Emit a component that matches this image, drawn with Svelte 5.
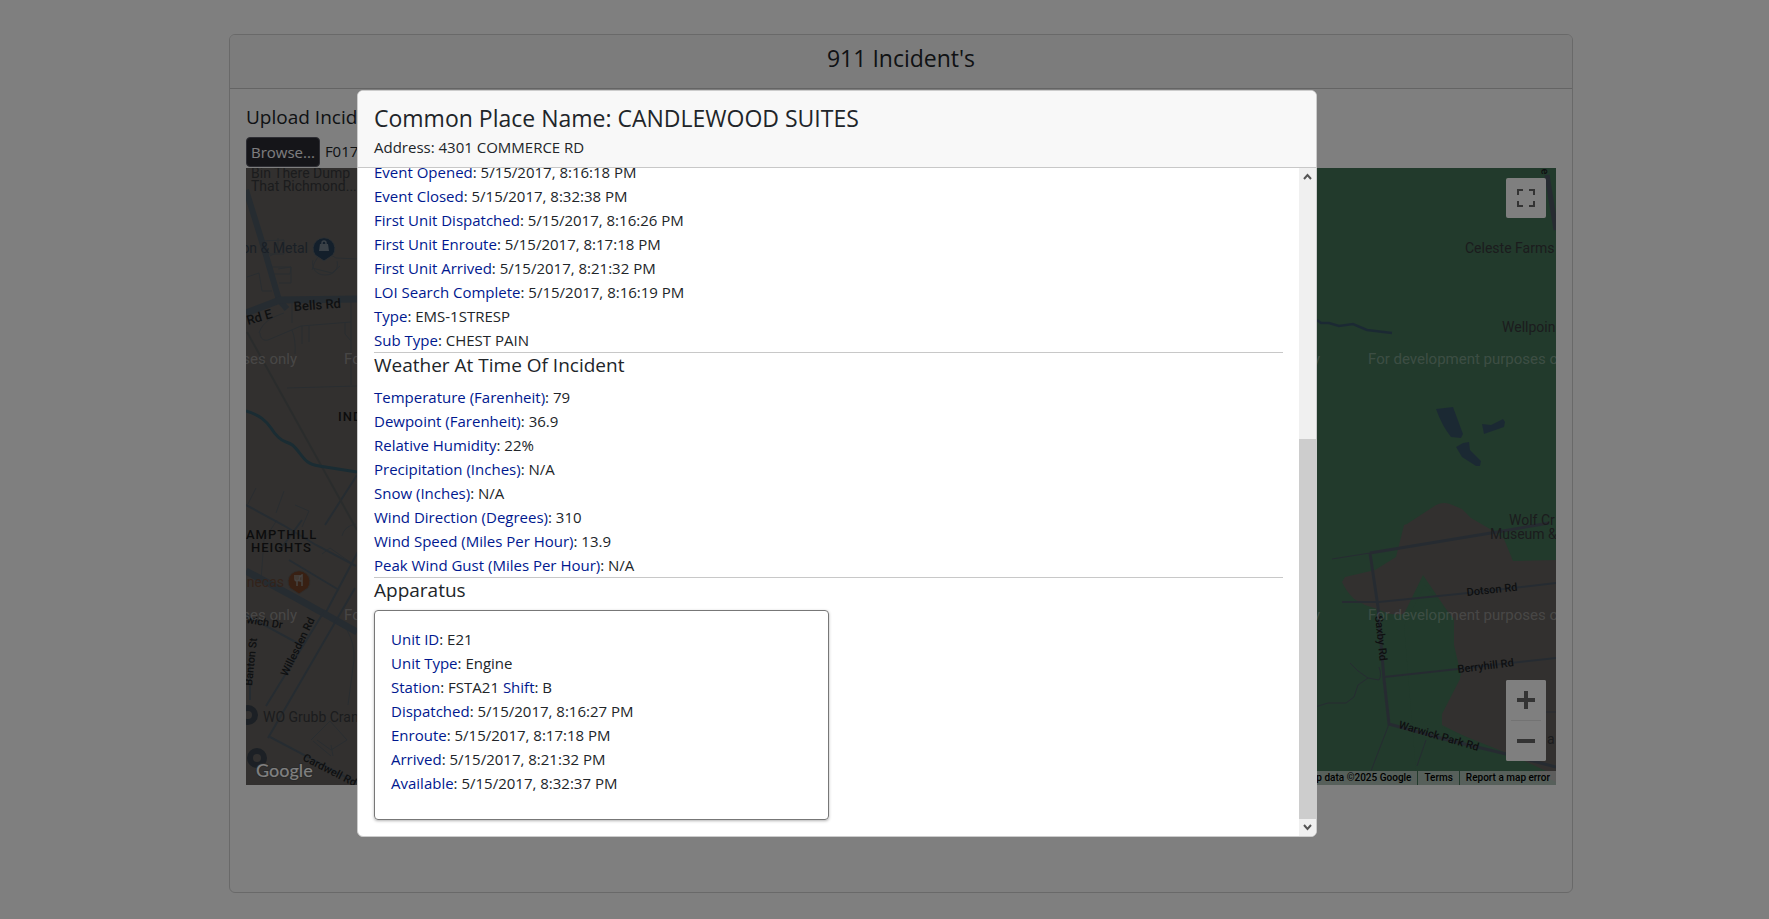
<script>
  const events = [
    ['Event Opened', '5/15/2017, 8:16:18 PM'],
    ['Event Closed', '5/15/2017, 8:32:38 PM'],
    ['First Unit Dispatched', '5/15/2017, 8:16:26 PM'],
    ['First Unit Enroute', '5/15/2017, 8:17:18 PM'],
    ['First Unit Arrived', '5/15/2017, 8:21:32 PM'],
    ['LOI Search Complete', '5/15/2017, 8:16:19 PM'],
    ['Type', 'EMS-1STRESP'],
    ['Sub Type', 'CHEST PAIN']
  ];
  const weather = [
    ['Temperature (Farenheit)', '79'],
    ['Dewpoint (Farenheit)', '36.9'],
    ['Relative Humidity', '22%'],
    ['Precipitation (Inches)', 'N/A'],
    ['Snow (Inches)', 'N/A'],
    ['Wind Direction (Degrees)', '310'],
    ['Wind Speed (Miles Per Hour)', '13.9'],
    ['Peak Wind Gust (Miles Per Hour)', 'N/A']
  ];
  const unit = [
    [['Unit ID', 'E21']],
    [['Unit Type', 'Engine']],
    [['Station', 'FSTA21'], ['Shift', 'B']],
    [['Dispatched', '5/15/2017, 8:16:27 PM']],
    [['Enroute', '5/15/2017, 8:17:18 PM']],
    [['Arrived', '5/15/2017, 8:21:32 PM']],
    [['Available', '5/15/2017, 8:32:37 PM']]
  ];
  let fileInput;
</script>

{#snippet field(name, value)}
  <span class="name">{name}</span>: {value}
{/snippet}

<main class="page">
  <section class="card">
    <header class="card-header"><h1>911 Incident's</h1></header>
    <div class="card-body">
      <label class="upload-label" for="incident-file">Upload Incident</label>
      <div class="upload">
        <input id="incident-file" type="file" bind:this={fileInput} />
        <button type="button" class="browse" onclick={() => fileInput.click()}>Browse...</button>
        <span>F017</span>
      </div>
      <div class="map">
        <svg class="tiles" width="200" height="617" viewBox="246 168 200 617" aria-hidden="true">
          <rect x="246" y="168" width="200" height="617" fill="#64615e" />
          <g fill="none" stroke="#535a61" stroke-width="1">
            <path d="M278 238v14l-8 4M262 241l22-1v14h-18M270 267h21l-1 7h-20M312 270q4-16 14-18l10 6 23 1M312 268l20 5 8-7M247 277l12-4 3 18h10M278 269l13-2v16h-12M313 260c-2 8 3 15 12 15s14-6 12-14M292 300v23M259 333c4-12 14-16 25-20M260 333c0 6 4 8 8 7l33-14 50-4M302 326v18M309 326v16M345 322v12l6 7M351 302v83M292 330q4 10 3 24M287 388l70-2M284 491l-8 22M256 488l-8 16M295 505l14 6-7 16M277 520l-13 20-3 40M322 554l8-6 20 14M356 524q-12 2-14 12M347 630q8 14 7 30l-6 45M311 740l19-19 17 19-16 10-14-10M313 741l18 15M331 745l2 11" />
          </g>
          <g fill="none" stroke="#4c5863">
            <path d="M246 190l17 55 16 55 8 9" stroke-width="6" />
            <path d="M246 313l34-13 77-1" stroke-width="7" />
            <path d="M246 505l37 20 33 20 40 21M280 550l22-30M289 560l50 30M325 525l32-50M325 614l37-70" stroke-width="2" />
            <path d="M246 571l50 27 61 34" stroke-width="7" />
            <path d="M325 610l-59 96M246 615l55 30M268 738l87-150M270 737l87 46M250 655v45" stroke-width="2" />
          </g>
          <path d="M247 332l110 198" fill="none" stroke="#555859" stroke-width="2" />
          <path d="M246 411c14 4 20 10 25 17 5 8 9 12 15 14s7 3 12 9c7 9 9 13 21 15l38 6" fill="none" stroke="#345866" stroke-width="3" />
          <g class="poi">
            <text x="251" y="178">Bin There Dump</text>
            <text x="251" y="191">That Richmond...</text>
            <text x="308" y="253" text-anchor="end" fill="#343f4c">on &amp; Metal</text>
            <text class="food" x="284" y="587" text-anchor="end">necas</text>
            <text x="263" y="722">WO Grubb Cran</text>
          </g>
          <g class="road">
            <text transform="translate(294 311) rotate(-4)">Bells Rd</text>
            <text transform="translate(248 325) rotate(-16)">Rd E</text>
          </g>
          <g class="road small">
            <text transform="translate(246 623) rotate(9)">wich Dr</text>
            <text transform="translate(252 686) rotate(-84)">Banton St</text>
            <text transform="translate(287 677) rotate(-64)">Willesden Rd</text>
            <text transform="translate(302 760) rotate(27)">Cardwell Rd</text>
          </g>
          <g class="district">
            <text x="338" y="421">IND</text>
            <text x="246" y="539">AMPTHILL</text>
            <text x="251" y="552">HEIGHTS</text>
          </g>
          <path d="M324 261l-9-6a11 11 0 1 1 18 0z" fill="#273e57" stroke="#5b6268" />
          <path d="M320 244h8l1 7h-10z" fill="#75828e" />
          <path d="M322 244v-1a2 2 0 0 1 4 0v1" fill="none" stroke="#75828e" stroke-width="1.5" />
          <path d="M299 594l-9-6a11 11 0 1 1 18 0z" fill="#704027" stroke="#5d5a58" />
          <path d="M295 575v4q0 2 2 2t2-2v-4M297 575v11M302 586v-11q-3 1-2 6h2" fill="none" stroke="#8b8580" stroke-width="1.5" />
          <circle cx="248" cy="715" r="7" fill="none" stroke="#38414b" stroke-width="6" />
          <circle cx="257" cy="758" r="7" fill="none" stroke="#38414b" stroke-width="6" />
          <g class="watermark">
            <text x="297" y="364" text-anchor="end">ses only</text><text x="344" y="364">Fo</text>
            <text x="297" y="620" text-anchor="end">ses only</text><text x="344" y="620">Fo</text>
          </g>
          <text class="logo" x="256" y="777">Google</text>
        </svg>
        <svg class="tiles" width="300" height="617" viewBox="1256 168 300 617" aria-hidden="true">
          <rect x="1256" y="168" width="300" height="617" fill="#447458" />
          <path d="M1407 524l26-17q8-6 17-3l12 5 9 9 19 11 14 10 9 22 43-1v222l-114-57v-14l19-36-7-30v-24l-31-46-19 39q-14 2-24-4l-15-5-11-6q-8-8-12-17l3-5 30-7 21-13 8-32z" fill="#64615e" />
          <path d="M1404 625l21-40 29 34v31l6 29-18 35v13l72 29 32 15h-130z" fill="#447458" />
          <path d="M1436 409l17-2 10 27-2 4-10-1q-9-11-15-28zM1482 424l9 1 12-6 2 3-1 5-20 7zM1456 447l7-4 6-1 1 8 11 11-1 5h-4l-14-9z" fill="#375366" />
          <path d="M1317 320l4 3h8l10 3 14-2 14 6 25 3" fill="none" stroke="#375366" stroke-width="2.500" />
          <g fill="none" stroke="#4c5763" stroke-width="3">
            <path d="M1370 553l133-22 46-8M1370 553l8 54 6 72 5 45 59 16 58 14 50 13" />
            <path d="M1384 677l74-8 98-11M1342 602h37l89-9 88-10" stroke-width="2" />
            <path d="M1332 559l38-6M1350 663l8 8 10 7 11 2q3-5 0-13M1368 678l-10 7-4 12-8 6h-18l-13 4M1389 724l-18 47M1426 740l-9 26M1546 712h10" stroke-width="1" />
            <path d="M1547 175l9 55" stroke-width="5" />
          </g>
          <g class="poi">
            <text x="1465" y="253">Celeste Farms</text>
            <text x="1502" y="332">Wellpoin</text>
            <text x="1509" y="525">Wolf Cr</text>
            <text x="1490" y="539">Museum &amp;</text>
            <text x="1547" y="744">a</text>
          </g>
          <g class="road small">
            <text transform="translate(1467 596) rotate(-6)">Dotson Rd</text>
            <text transform="translate(1458 673) rotate(-7)">Berryhill Rd</text>
            <text transform="translate(1375 616) rotate(84)">Saxby Rd</text>
            <text transform="translate(1398 728) rotate(16)">Warwick Park Rd</text>
            <text transform="translate(1541 169) rotate(82)">e</text>
          </g>
          <g class="watermark">
            <text x="1320" y="364" text-anchor="end">y</text><text x="1368" y="364">For development purposes o</text>
            <text x="1320" y="620" text-anchor="end">y</text><text x="1368" y="620">For development purposes o</text>
          </g>
        </svg>
        <button type="button" class="control fullscreen" aria-label="Toggle fullscreen view">
          <svg width="18" height="18" viewBox="0 0 18 18"><path d="M1 6V1h5M12 1h5v5M17 12v5h-5M6 17H1v-5" fill="none" stroke="#666" stroke-width="2" /></svg>
        </button>
        <div class="zoom">
          <button type="button" class="control" aria-label="Zoom in">
            <svg width="18" height="18" viewBox="0 0 18 18"><path d="M9 0v18M0 9h18" stroke="#666" stroke-width="4" /></svg>
          </button>
          <button type="button" class="control" aria-label="Zoom out">
            <svg width="18" height="18" viewBox="0 0 18 18"><path d="M0 9h18" stroke="#666" stroke-width="4" /></svg>
          </button>
        </div>
        <div class="credits"><span>Map data ©2025 Google</span><a href="#terms">Terms</a><a href="#report">Report a map error</a></div>
      </div>
    </div>
  </section>
</main>

<div class="overlay">
  <div class="modal" role="dialog" aria-modal="true" aria-labelledby="place-name">
    <header class="modal-header">
      <h2 id="place-name">Common Place Name: CANDLEWOOD SUITES</h2>
      <div>Address: 4301 COMMERCE RD</div>
    </header>
    <div class="modal-body">
      <div class="details">
        <section>
          {#each events as [name, value]}<div>{@render field(name, value)}</div>{/each}
        </section>
        <section class="ruled">
          <h3>Weather At Time Of Incident</h3>
          {#each weather as [name, value]}<div>{@render field(name, value)}</div>{/each}
        </section>
        <section class="ruled">
          <h3>Apparatus</h3>
          <div class="unit">
            {#each unit as row}
              <div>{#each row as [name, value], i}{i ? ' ' : ''}{@render field(name, value)}{/each}</div>
            {/each}
          </div>
        </section>
      </div>
      <div class="scrollbar">
        <button type="button" aria-label="Scroll up"><svg width="9" height="7" viewBox="0 0 9 7"><path d="M1 6l3.500-4L8 6" fill="none" stroke="#555" stroke-width="2" /></svg></button>
        <div class="track"><div class="thumb"></div></div>
        <button type="button" aria-label="Scroll down"><svg width="9" height="7" viewBox="0 0 9 7"><path d="M1 1l3.500 4L8 1" fill="none" stroke="#555" stroke-width="2" /></svg></button>
      </div>
    </div>
  </div>
</div>

<style>
  :global(body) {
    margin: 0;
    background: #fff;
    color: #212529;
    font: 15px/24px "Open Sans", "Noto Sans", sans-serif;
  }
  * { box-sizing: border-box; }
  h1, h2, h3 { margin: 0; font-weight: 400; }
  button { padding: 0; border: 0; font: inherit; }

  .page {
    display: grid;
    grid-template-columns: 229fr 1344fr 196fr;
    min-height: 100vh;
    padding: 34px 0 26px;
  }
  .card {
    grid-column: 2;
    border: 1px solid #d3d3d3;
    border-radius: 6px;
  }
  .card-header {
    padding: 8px 16px 15px;
    border-bottom: 1px solid #c8c8c8;
    background: #f8f8f8;
    border-radius: 5px 5px 0 0;
    text-align: center;
  }
  h1, h2 { font-size: 23px; line-height: 30px; }
  .card-body { padding: 16px; }
  .upload-label { display: block; margin-bottom: 8px; font-size: 19px; line-height: 24px; }
  .upload { display: flex; align-items: flex-start; gap: 5px; height: 31px; line-height: 29px; }
  .upload input { position: absolute; width: 1px; height: 1px; opacity: 0; }
  .browse {
    height: 30px;
    padding: 0 4px;
    border: 1px solid #5b5b66;
    border-radius: 4px;
    background: #2b2a33;
    color: #fbfbfe;
    line-height: 28px;
  }

  .map {
    position: relative;
    display: flex;
    justify-content: space-between;
    background: #64615e;
    overflow: hidden;
    font-family: Roboto, sans-serif;
  }
  .tiles { display: block; flex: none; }
  .poi { font-size: 14px; fill: #37383b; }
  .food { fill: #654637; }
  .road { font-size: 13px; font-weight: 500; fill: #1d2023; }
  .road.small { font-size: 11px; }
  .district { font-size: 13px; font-weight: 500; fill: #18191a; letter-spacing: 1px; }
  .watermark { font-size: 15px; fill: #fff; fill-opacity: .3; }
  .logo { font: 500 18px Lato, sans-serif; fill: #fff; stroke: #555; stroke-width: 2px; paint-order: stroke; }
  .control { display: grid; place-items: center; width: 40px; height: 40px; background: #fff; border-radius: 2px; }
  .fullscreen { position: absolute; top: 10px; right: 10px; }
  .zoom { position: absolute; right: 10px; bottom: 24px; background: #fff; border-radius: 2px; }
  .zoom .control + .control::before { content: ""; width: 30px; height: 1px; background: #e6e6e6; }
  .zoom .control + .control { grid-template-rows: 1px 40px; height: 41px; }
  .credits { position: absolute; right: 0; bottom: 0; display: flex; gap: 1px; font-size: 10px; font-weight: 500; line-height: 14px; }
  .credits > * { padding: 0 6px; background: rgba(245, 245, 245, .6); color: #000; text-decoration: none; }

  .overlay {
    position: fixed;
    inset: 0;
    display: grid;
    grid-template-columns: 357fr 960fr 452fr;
    padding: 90px 0 82px;
    background: rgba(0, 0, 0, .5);
  }
  .modal {
    grid-column: 2;
    display: flex;
    flex-direction: column;
    min-height: 0;
    border: 1px solid #ccc;
    border-radius: 6px;
    background: #fff;
    overflow: hidden;
  }
  .modal-header { padding: 12px 16px 8px; border-bottom: 1px solid #c8c8c8; background: #f8f8f8; }
  h2 { padding-bottom: 2px; }
  .modal-body { flex: 1; min-height: 0; display: flex; }
  .details {
    flex: 1;
    min-width: 0;
    display: flex;
    flex-direction: column;
    justify-content: flex-end;
    padding: 0 16px 16px;
    overflow: hidden;
  }
  .details section { flex: none; }
  .ruled { border-top: 1px solid #c8c8c8; }
  h3 { margin-bottom: 8px; font-size: 19px; line-height: 24px; }
  .name { color: #00188f; }
  .unit {
    width: 50%;
    padding: 16px 16px 24px;
    border: 1px solid #777;
    border-radius: 4px;
    box-shadow: 0 1px 3px rgba(0, 0, 0, .3);
  }
  .scrollbar { display: flex; flex-direction: column; width: 17px; background: #f0f0f0; }
  .scrollbar button { display: grid; place-items: center; height: 17px; background: #f0f0f0; }
  .track { flex: 1; display: flex; flex-direction: column; justify-content: flex-end; }
  .thumb { height: 60%; background: #cdcdcd; }
</style>
